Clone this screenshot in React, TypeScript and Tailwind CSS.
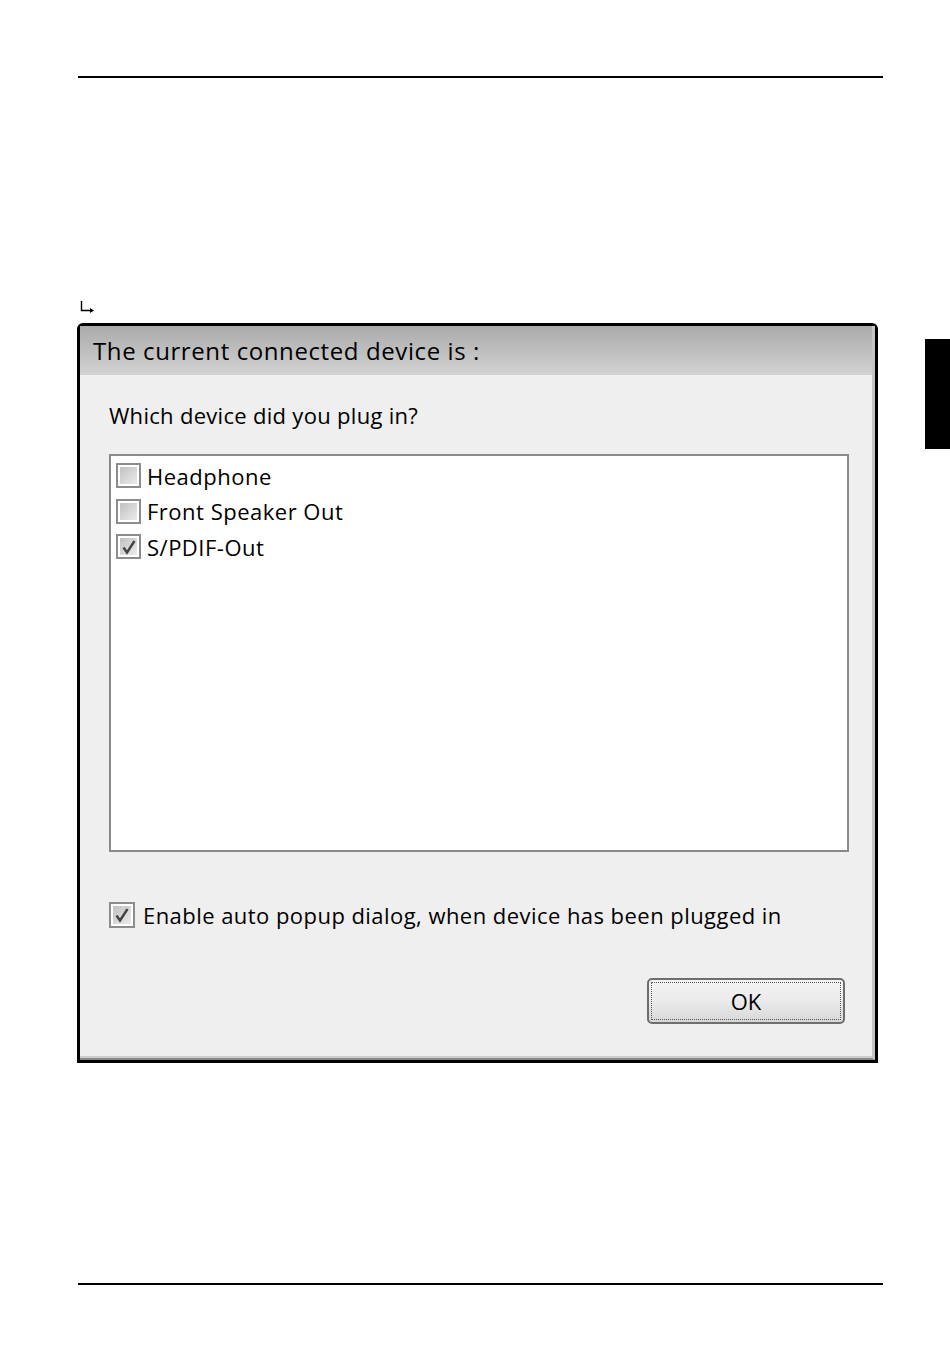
const font = { fontFamily: '"Open Sans", "Noto Sans", sans-serif' };

function Check({ checked, size = 25 }: { checked: boolean; size?: number }) {
  return (
    <span
      className="flex shrink-0 items-center justify-center border-2 border-[#8c8c8c] bg-white p-[2px]"
      style={{ width: size, height: size }}
    >
      <span className="flex h-full w-full items-center justify-center bg-gradient-to-br from-[#c0c0c0] to-[#ececec]">
        {checked && (
          <svg viewBox="0 0 16 16" className="h-[16px] w-[16px]">
            <path d="M2.5 8.5 L6 13.5 L13.5 2" fill="none" stroke="#444" strokeWidth="2.4" />
          </svg>
        )}
      </span>
    </span>
  );
}

const devices = [
  { label: "Headphone", checked: false },
  { label: "Front Speaker Out", checked: false },
  { label: "S/PDIF-Out", checked: true },
];

export default function App() {
  return (
    <div className="relative h-[1348px] w-[950px] bg-white" style={font}>
      <div className="ml-[78px] w-[805px] pt-[76px]">
        <div className="h-[2px] bg-black" />
      </div>

      <div className="ml-[80px] mt-[222px] h-[16px]">
        <svg viewBox="0 0 15 14" className="h-[14px] w-[15px]">
          <path d="M1.5 1 V10.5 H12" fill="none" stroke="#000" strokeWidth="1.4" />
          <path d="M10 8 L14 10.5 L10 13 Z" fill="#000" />
        </svg>
      </div>

      <div className="ml-[77px] mt-[7px] w-[801px] rounded-t-[6px] border-[3px] border-black">
        <div className="border-b-2 border-r-[3px] border-b-[#8a8a8a] border-r-[#c6c6c6]">
          <div className="flex h-[49px] items-center bg-gradient-to-b from-[#ababab] to-[#d2d2d2] pl-[13px] text-[24px] tracking-[0.6px] text-black">
            The current connected device is :
          </div>
          <div className="border-b-2 border-[#cfcfcf] bg-[#efefef] pb-[32px] pl-[29px] pr-[27px] pt-[26px]">
            <div className="text-[22px] leading-[29px] tracking-[0.3px] text-black">Which device did you plug in?</div>

            <div className="mt-[24px] flex h-[398px] w-[740px] flex-col border-2 border-[#8a8a8a] bg-white pl-[5px] pt-[2px]">
              {devices.map((d) => (
                <div key={d.label} className="flex h-[35.5px] items-center gap-[6px]">
                  <Check checked={d.checked} />
                  <span className="text-[22px] leading-[30px] tracking-[0.5px] text-black">{d.label}</span>
                </div>
              ))}
            </div>

            <div className="mt-[50px] flex h-[26px] items-center gap-[8px]">
              <Check checked size={26} />
              <span className="text-[22px] leading-[26px] tracking-[0.45px] text-black">
                Enable auto popup dialog, when device has been plugged in
              </span>
            </div>

            <div className="mt-[50px] flex justify-end">
              <button className="h-[46px] w-[198px] rounded-[5px] border-2 border-[#6e6e6e] bg-gradient-to-b from-[#f4f4f4] via-[#ebebeb] to-[#d8d8d8] p-[2px]">
                <span className="flex h-full w-full items-center justify-center border border-dotted border-[#555] text-[22px] text-black">
                  OK
                </span>
              </button>
            </div>
          </div>
        </div>
      </div>

      <div className="absolute left-[925px] top-[339px] h-[110px] w-[25px] bg-black" />

      <div className="absolute left-[78px] top-[1283px] h-[2px] w-[805px] bg-black" />
    </div>
  );
}
